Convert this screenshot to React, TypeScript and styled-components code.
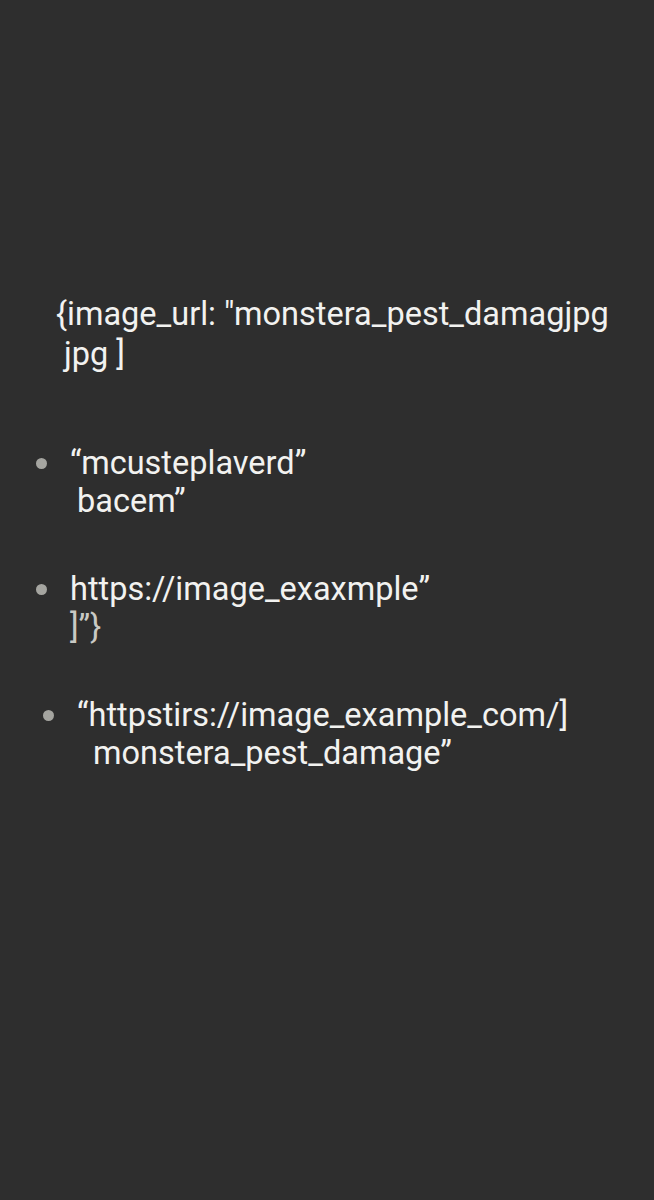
import React from "react";
import styled, { createGlobalStyle } from "styled-components";

const Global = createGlobalStyle`
  html, body { margin: 0; padding: 0; background: #2e2e2e; }
  body { font-family: Roboto, "Liberation Sans", sans-serif; }
`;

const Page = styled.div`
  width: 654px;
  height: 1200px;
  background: #2e2e2e;
  color: #f2f2f0;
  box-sizing: border-box;
  padding-top: 294px;
`;

const Heading = styled.div`
  padding-left: 56px;
  font-size: 32.5px;
  line-height: 40px;
`;

const Line = styled.div<{ $indent?: number; $muted?: boolean }>`
  padding-left: ${(p) => p.$indent ?? 0}px;
  color: ${(p) => (p.$muted ? "#c9c9c4" : "inherit")};
  white-space: nowrap;
`;

const List = styled.div`
  display: flex;
  flex-direction: column;
  margin-top: 70px;
  gap: 50px;
`;

const Item = styled.div<{ $left: number }>`
  display: flex;
  align-items: flex-start;
  padding-left: ${(p) => p.$left}px;
  font-size: 32.5px;
  line-height: 38px;
`;

const Dot = styled.span`
  flex: none;
  width: 11px;
  height: 11px;
  border-radius: 50%;
  background: #a5a5a0;
  margin-top: 14px;
  margin-right: 23px;
`;

const Text = styled.div``;

export default function App() {
  return (
    <>
      <Global />
      <Page>
        <Heading>
          <Line>{'{image_url: "monstera_pest_damagjpg'}</Line>
          <Line $indent={8}>{"jpg ]"}</Line>
        </Heading>
        <List>
          <Item $left={36}>
            <Dot />
            <Text>
              <Line>“mcusteplaverd”</Line>
              <Line $indent={7}>bacem”</Line>
            </Text>
          </Item>
          <Item $left={36}>
            <Dot />
            <Text>
              <Line>https://image_exaxmple”</Line>
              <Line $muted>{"]”}"}</Line>
            </Text>
          </Item>
          <Item $left={43}>
            <Dot />
            <Text>
              <Line>“httpstirs://image_example_com/]</Line>
              <Line $indent={16}>monstera_pest_damage”</Line>
            </Text>
          </Item>
        </List>
      </Page>
    </>
  );
}
